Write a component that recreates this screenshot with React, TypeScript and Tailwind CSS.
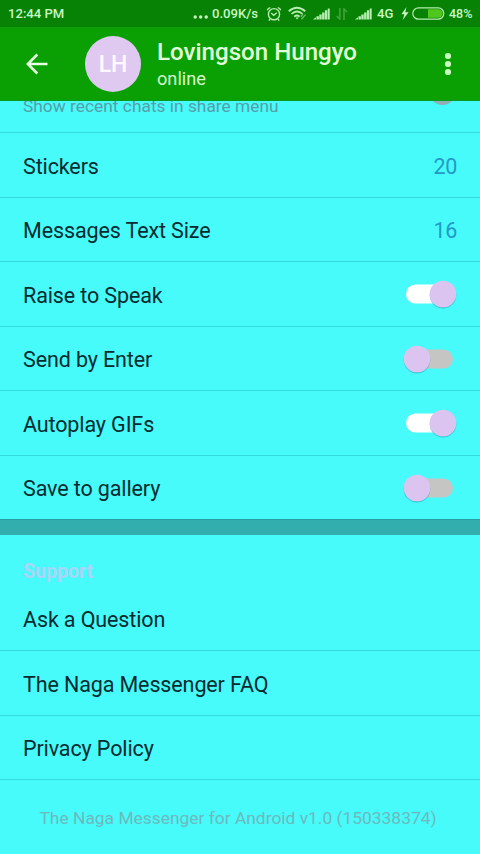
import React from "react";

function SignalBars() {
  return (
    <svg width="17" height="13" viewBox="0 0 17 13" fill="#b5eeb0">
      <path d="M0 12.5 3 10.2V12.5zM3.5 9.2h2.4v3.3H3.5zM6.3 7.4h2.4v5.1H6.3zM9.1 5.4h2.4v7.1H9.1zM11.9 3.3h2.3v9.2h-2.3zM14.7 1.4h2v11.1h-2z" />
    </svg>
  );
}

function StatusBar() {
  return (
    <div className="flex h-[27px] items-center bg-[#078204] text-[13.1px] font-medium text-[#c9f7c4]">
      <span className="ml-[8px] w-[185px] shrink-0 whitespace-nowrap">12:44 PM</span>
      <svg width="15" height="4" viewBox="0 0 15 4" fill="#c9f7c4" className="mt-[6px] shrink-0">
        <circle cx="2.2" cy="2" r="1.7" />
        <circle cx="7.7" cy="2" r="1.7" />
        <circle cx="13.2" cy="2" r="1.7" />
      </svg>
      <span className="ml-[4px] w-[54px] shrink-0 whitespace-nowrap">0.09K/s</span>
      <svg width="16" height="16" viewBox="0 0 16 16" fill="none" stroke="#b5eeb0" strokeWidth="1.4" className="shrink-0">
        <circle cx="8" cy="8.2" r="5.6" />
        <path d="M1.3 4.2Q2 2 4.3 1.6M14.7 4.2Q14 2 11.7 1.6M5.2 7 7.7 9.4 10.8 6.8M4 13.2l-1.2 1.4M12 13.2l1.2 1.4" />
      </svg>
      <svg width="20" height="15" viewBox="0 0 20 15" fill="none" stroke="#b5eeb0" strokeWidth="1.9" className="ml-[6px] shrink-0">
        <path d="M.8 5.2Q9-1.8 17.2 5.2M3.5 7.9Q9 3.2 14.5 7.9M6.2 10.6Q9 8.2 11.6 10.6" />
        <path d="M7.5 11.5h3.2L9.1 13.5z" fill="#b5eeb0" stroke="none" />
        <path d="m13.5 13.2 4-4.6M12.8 10.8l2.2-2.5" strokeWidth="1.3" stroke="#6ec166" />
      </svg>
      <span className="ml-[5px] shrink-0"><SignalBars /></span>
      <svg width="12" height="12" viewBox="0 0 12 12" fill="none" stroke="#3fa239" strokeWidth="1.7" className="ml-[6px] shrink-0">
        <path d="M3.8 0v11L.7 8.1M8 12V1l3.1 3" />
      </svg>
      <span className="ml-[7px] shrink-0"><SignalBars /></span>
      <span className="ml-[5px] w-[24px] shrink-0 whitespace-nowrap">4G</span>
      <svg width="8" height="13" viewBox="0 0 8 13" fill="#c9f7c4" className="shrink-0">
        <path d="M5.5 0 .4 7.3h3L1.7 13 7.6 5.2H4.3z" />
      </svg>
      <svg width="33" height="13" viewBox="0 0 33 13" className="ml-[3px] shrink-0">
        <rect x=".8" y=".8" width="31" height="11.4" rx="5.7" fill="none" stroke="#b5eeb0" strokeWidth="1.2" />
        <path d="M16 2.3h10.4a4.2 4.2 0 0 1 0 8.4H16z" fill="#4fc71c" />
      </svg>
      <span className="mt-px ml-[4px] shrink-0 text-[12.5px] whitespace-nowrap">48%</span>
    </div>
  );
}

function Header() {
  return (
    <header className="flex h-[74px] border-b border-[#0b9a20] bg-[#0a9f02]">
      <svg width="24" height="24" viewBox="0 0 24 24" fill="none" stroke="#e6ffe2" strokeWidth="2.5" className="mt-[25px] ml-[25px]">
        <path d="M22.5 12H3.2M12.3 2.5 2.8 12l9.5 9.5" />
      </svg>
      <div className="mt-[9px] ml-[36px] flex size-[56px] items-center justify-center rounded-full bg-[#dfc9f1] pt-[2px] text-[23px] font-medium text-[#fff8ff]">
        LH
      </div>
      <div className="mt-[11px] ml-[16px] grow text-[#e2ffdc]">
        <div className="text-[24.1px] leading-[28px] font-medium whitespace-nowrap text-[#e2ffdc]">Lovingson Hungyo</div>
        <div className="mt-[3px] text-[18.2px] leading-[20px] text-[#d3fbcf]">online</div>
      </div>
      <svg width="8" height="24" viewBox="0 0 8 24" fill="#c7fac0" className="mt-[25px] mr-[28px]">
        <circle cx="4" cy="4" r="3.1" />
        <circle cx="4" cy="12" r="3.1" />
        <circle cx="4" cy="20" r="3.1" />
      </svg>
    </header>
  );
}

function Toggle({ on }: { on: boolean }) {
  return (
    <svg width="56" height="36" viewBox="0 0 56 36" className="mt-px mr-[21px]">
      {on ? (
        <>
          <rect x="3" y="8.5" width="46" height="19" rx="9.5" fill="#fff" />
          <circle cx="40" cy="19.2" r="13.3" fill="#239cae" opacity=".5" />
          <circle cx="40" cy="18" r="13.3" fill="#dcc4f0" />
        </>
      ) : (
        <>
          <rect x="7" y="8.5" width="43" height="19" rx="9.5" fill="#c5c5c4" />
          <circle cx="14" cy="19.2" r="13.3" fill="#239cae" opacity=".5" />
          <circle cx="14" cy="18" r="13.3" fill="#dcc4f0" />
        </>
      )}
    </svg>
  );
}

function Row({ label, children, last }: { label: string; children?: React.ReactNode; last?: boolean }) {
  return (
    <div
      className={
        last
          ? "flex h-[63.5px] items-center justify-between pl-[23px]"
          : "flex h-[64.5px] items-center justify-between border-b border-[#35dade] pl-[23px]"
      }
    >
      <span className="mt-[4px] text-[21.5px] tracking-[-0.12px] whitespace-nowrap text-[#092b30]">{label}</span>
      {children}
    </div>
  );
}

function Value({ children }: { children: React.ReactNode }) {
  return <span className="mt-[4px] mr-[23px] text-[21.5px] tracking-[-0.3px] text-[#2499c8]">{children}</span>;
}

export default function App() {
  return (
    <div className="h-[854px] w-[480px] overflow-hidden bg-[#46fbfa] font-['Roboto',sans-serif]">
      <StatusBar />
      <Header />
      <div className="flex h-[32px] justify-between overflow-hidden border-b border-[#35dade] pl-[23px]">
        <span className="-mt-[6px] text-[17.35px] leading-[22px] whitespace-nowrap text-[#579fa8]">Show recent chats in share menu</span>
        <div className="-mt-[23px] mr-[24px] size-[27px] shrink-0 rounded-full bg-[#8faeb3]" />
      </div>
      <Row label="Stickers"><Value>20</Value></Row>
      <Row label="Messages Text Size"><Value>16</Value></Row>
      <Row label="Raise to Speak"><Toggle on /></Row>
      <Row label="Send by Enter"><Toggle on={false} /></Row>
      <Row label="Autoplay GIFs"><Toggle on /></Row>
      <Row label="Save to gallery" last><Toggle on={false} /></Row>
      <div className="h-[16px] border-t border-[#2a9fa0] bg-[#32aeae]" />
      <div className="h-[51.5px] pt-[24px] pl-[23px] text-[19.5px] leading-[26px] font-bold text-[#a9d5f7]">Support</div>
      <Row label="Ask a Question" />
      <Row label="The Naga Messenger FAQ" />
      <Row label="Privacy Policy" />
      <div className="pt-[26.5px] pr-[4px] text-center text-[17.4px] leading-[22px] whitespace-nowrap text-[#6db9bd]">
        The Naga Messenger for Android v1.0 (150338374)
      </div>
    </div>
  );
}
